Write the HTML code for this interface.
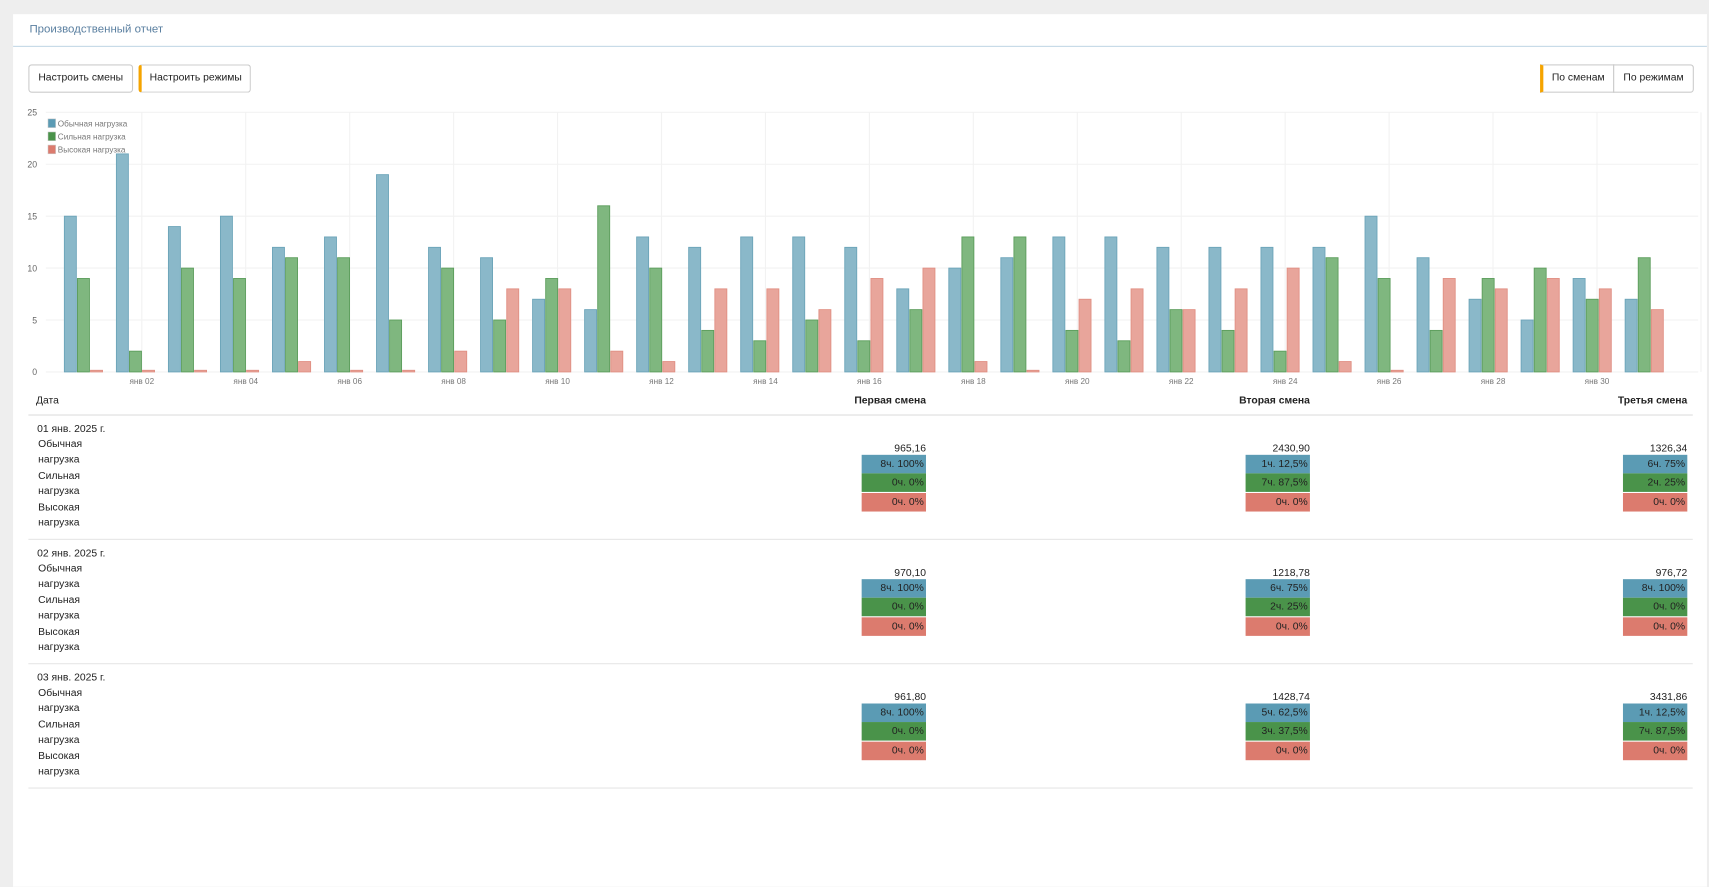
<!DOCTYPE html>
<html><head><meta charset="utf-8">
<style>
body{margin:0;background:#eee;font-family:"Liberation Sans",sans-serif;color:#222;width:1709px;height:790px;overflow:hidden;position:relative}
#w{position:absolute;left:0;top:0;width:1567px;height:725px;transform:scale(1.0907);transform-origin:0 0}
.panel{position:absolute;left:12px;top:13px;width:1553px;height:800px;background:#fff}
.title{position:absolute;left:15px;top:8px;font-size:10.5px;color:#5a7fa0}
.hr{position:absolute;left:0;top:29px;width:1553px;height:1px;background:#c3d7e6}
.btn{position:absolute;top:46px;height:24px;border:1px solid #ccc;border-radius:3px;font-size:9.5px;line-height:24px;text-align:center;background:#fff;box-sizing:content-box}
.or{border-left:3px solid #f5a400}
.t{position:absolute;font-size:9.5px;white-space:nowrap}
.r{text-align:right}
.box{position:absolute;width:59px;height:17px;font-size:9.5px;line-height:17px;text-align:right;box-sizing:border-box;padding-right:2px;color:#222}
</style></head><body>
<div id="w">
<div class="panel">
<div class="title">Производственный отчет</div>
<div class="hr"></div>
<div class="btn" style="left:14px;width:94px">Настроить смены</div>
<div class="btn or" style="left:115px;width:99px">Настроить режимы</div>
<div class="btn or" style="left:1400px;width:64px;border-radius:0">По сменам</div>
<div class="btn" style="left:1467px;width:72px;border-radius:0 3px 3px 0">По режимам</div>
</div>
<svg id="ch" width="1567" height="360" style="position:absolute;left:0;top:0" font-family="Liberation Sans, sans-serif"></svg>
<div id="tb"></div>
</div>
<script>
var d=[[15,9,0],[21,2,0],[14,10,0],[15,9,0],[12,11,1],[13,11,0],[19,5,0],[12,10,2],[11,5,8],[7,9,8],[6,16,2],[13,10,1],[12,4,8],[13,3,8],[13,5,6],[12,3,9],[8,6,10],[10,13,1],[11,13,0],[13,4,7],[13,3,8],[12,6,6],[12,4,8],[12,2,10],[12,11,1],[15,9,0],[11,4,9],[7,9,8],[5,10,9],[9,7,8],[7,11,6]];
var s='',y0=341,k=9.52;
for(var v=0;v<=25;v+=5){var y=y0-v*k;s+='<line x1="42" x2="1557" y1="'+y+'" y2="'+y+'" stroke="#f2f2f2"/><text x="34" y="'+(y+3)+'" font-size="8" fill="#666" text-anchor="end">'+v+'</text>';}
for(var i=0;i<16;i++){var x=130+i*95.3;s+='<line x1="'+x+'" x2="'+x+'" y1="103" y2="341" stroke="#f2f2f2"/>';}
var fc=['#8ab8c9','#7fb77f','#e8a59b'],sc=['#6aa3b8','#5a9c5a','#e08e82'];
for(var i=0;i<31;i++){for(var j=0;j<3;j++){var x=59+i*47.7+j*12,h=d[i][j]*k;if(h<1.5)h=1.5;s+='<rect x="'+x+'" y="'+(y0-h)+'" width="11" height="'+h+'" fill="'+fc[j]+'" stroke="'+sc[j]+'" stroke-width="0.8"/>';}
if(i%2==1){var dd=i+1;s+='<text x="'+(130+(i-1)/2*95.3)+'" y="352" font-size="7.5" fill="#777" text-anchor="middle">янв '+(dd<10?'0':'')+dd+'</text>';}}
var L=['Обычная нагрузка','Сильная нагрузка','Высокая нагрузка'],lc=['#5b9bb4','#4a934a','#dc7b6e'];
for(var j=0;j<3;j++){s+='<rect x="44" y="'+(109+j*12)+'" width="7" height="8" fill="'+lc[j]+'" stroke="#ccc" stroke-width="0.5"/><text x="53" y="'+(116+j*12)+'" font-size="7.5" fill="#777">'+L[j]+'</text>';}
document.getElementById('ch').innerHTML=s;
var t='<div class="t" style="left:33px;top:362px">Дата</div>';
var R=[849,1201,1547],H=['Первая смена','Вторая смена','Третья смена'];
for(var c=0;c<3;c++)t+='<div class="t r" style="left:'+(R[c]-150)+'px;width:150px;top:362px;font-weight:bold">'+H[c]+'</div>';
t+='<div style="position:absolute;left:26px;top:380px;width:1526px;height:1px;background:#ddd"></div>';
var rows=[['01 янв. 2025 г.',[['965,16','8ч. 100%','0ч. 0%','0ч. 0%'],['2430,90','1ч. 12,5%','7ч. 87,5%','0ч. 0%'],['1326,34','6ч. 75%','2ч. 25%','0ч. 0%']]],
['02 янв. 2025 г.',[['970,10','8ч. 100%','0ч. 0%','0ч. 0%'],['1218,78','6ч. 75%','2ч. 25%','0ч. 0%'],['976,72','8ч. 100%','0ч. 0%','0ч. 0%']]],
['03 янв. 2025 г.',[['961,80','8ч. 100%','0ч. 0%','0ч. 0%'],['1428,74','5ч. 62,5%','3ч. 37,5%','0ч. 0%'],['3431,86','1ч. 12,5%','7ч. 87,5%','0ч. 0%']]]];
for(var r=0;r<3;r++){var b=380+r*114;
t+='<div class="t" style="left:34px;top:'+(b+8)+'px">'+rows[r][0]+'</div>';
var ll=[['Обычная','нагрузка'],['Сильная','нагрузка'],['Высокая','нагрузка']];
for(var j=0;j<3;j++)t+='<div class="t" style="left:35px;top:'+(b+21+j*29)+'px;line-height:14px">'+ll[j][0]+'<br>'+ll[j][1]+'</div>';
for(var c=0;c<3;c++){var v=rows[r][1][c];t+='<div class="t r" style="left:'+(R[c]-100)+'px;width:100px;top:'+(b+26)+'px">'+v[0]+'</div>';
for(var j=0;j<3;j++)t+='<div class="box" style="left:'+(R[c]-59)+'px;top:'+(b+37+j*17.3)+'px;background:'+lc[j]+'">'+v[j+1]+'</div>';}
t+='<div style="position:absolute;left:26px;top:'+(b+114)+'px;width:1526px;height:1px;background:#e6e6e6"></div>';}
document.getElementById('tb').innerHTML=t;
</script>
</body></html>
